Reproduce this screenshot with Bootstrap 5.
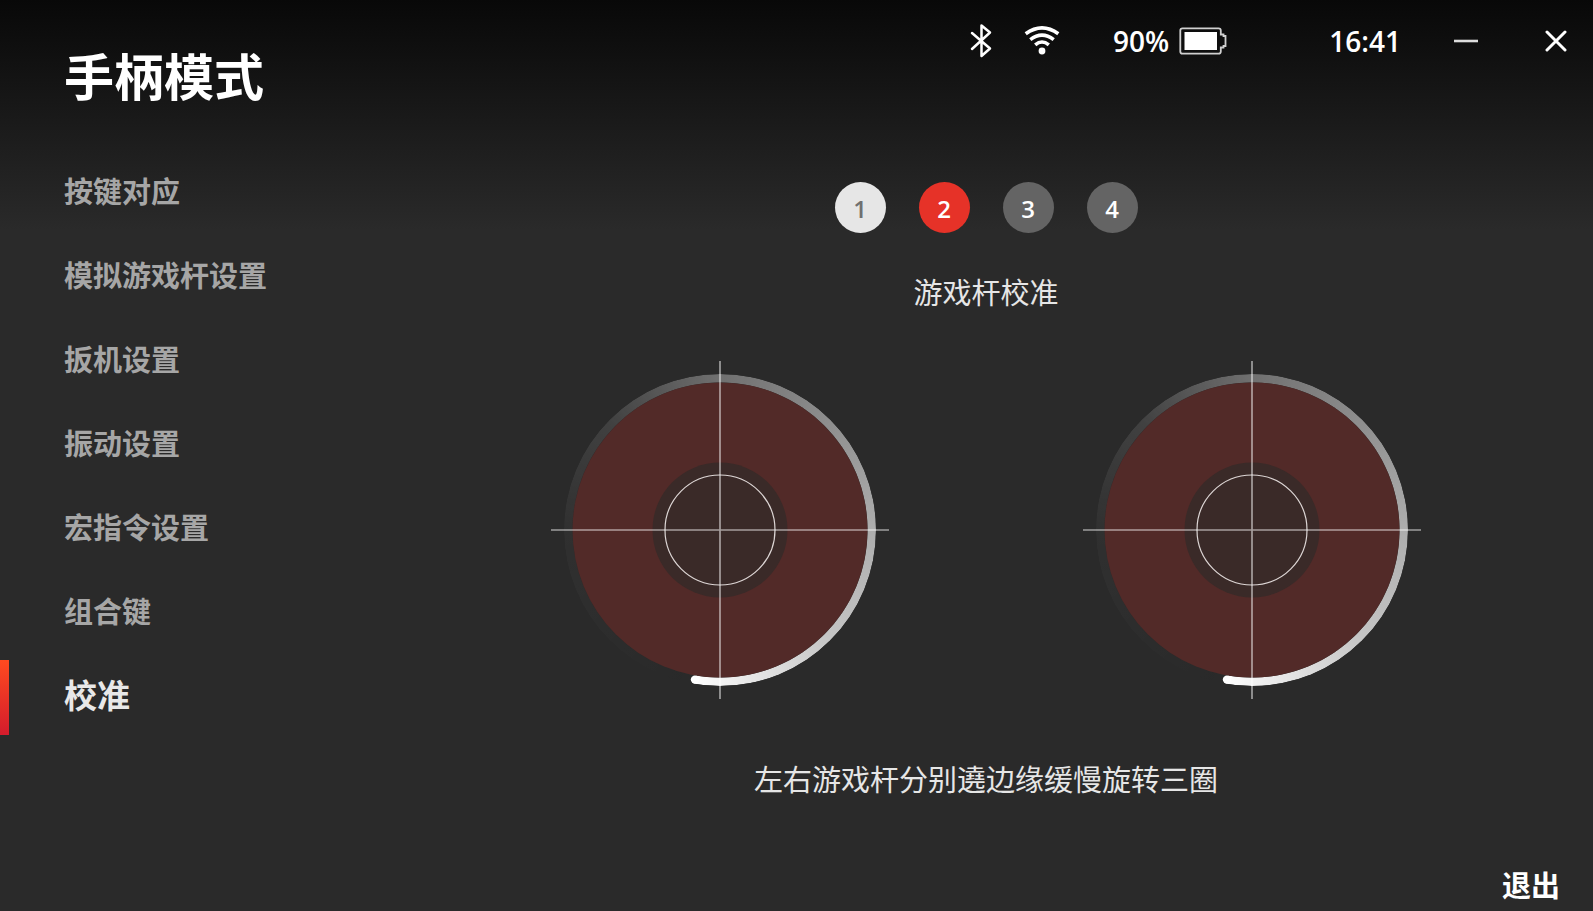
<!DOCTYPE html>
<html lang="zh-CN">
<head>
<meta charset="utf-8">
<meta name="viewport" content="width=device-width, initial-scale=1">
<title>手柄模式</title>
<link href="https://cdn.jsdelivr.net/npm/bootstrap@5.3.0/dist/css/bootstrap.min.css" rel="stylesheet">
<style>
body{background:#2a2a2a linear-gradient(#080808,#2a2a2a 230px) no-repeat;color:#fff;font-family:"Open Sans","Noto Sans CJK SC",sans-serif;font-size:29px;line-height:40px}
.side{width:379px;padding-top:47px}
.side h1{font-size:50px;line-height:60px;margin:0 0 43px;padding-left:64px;font-weight:700}
.side .nav-link{height:84px;padding:0 0 0 64px;color:#a6a6a6;font-weight:700;position:relative}
.side .nav-link.active{font-size:33px;color:#e8e8e8}
.side .nav-link.active::before{content:"";position:absolute;left:0;top:6px;width:9px;height:75px;background:linear-gradient(#ff4a20,#d41c2c)}
.topbar{height:82px;padding-right:26px;font-weight:600;font-size:28px}
.topbar button,.exit{background:none;border:0;color:#fff;padding:0}
.ico-bt{margin-right:31px}
.ico-wifi{margin-right:53px}
.ico-battery{margin:0 102px 0 10px}
.btn-min{margin:0 67px 0 53px}
.steps{gap:33px;margin-top:100px}
.step{width:51px;height:51px;border-radius:50%;border:0;padding:2px 0 0;font-size:24px;line-height:24px;font-weight:600;background:#646464;color:#fff}
.step.done{background:#e6e6e6;color:#707070}
.step.now{background:#e63228}
.hint{color:#e6e6e6;font-weight:400}
.title-hint{margin:40px 0 48px}
.foot-hint{margin:61px 0 0}
.dials{gap:194px}
.dial{position:relative;width:338px;height:338px}
.dial::before{content:"";position:absolute;inset:13px;border-radius:50%;
background:conic-gradient(from 189.5deg,#fff0 0deg,#ffffff08 80deg,#ffffff1c 125deg,#ffffff54 170deg,#ffffff78 215deg,#ffffff9e 260deg,#ffffffba 305deg,#fffffff0 350deg,#fff 360deg);
-webkit-mask:radial-gradient(closest-side,#0000 147px,#000 148px);mask:radial-gradient(closest-side,#0000 147px,#000 148px)}
.dial svg{position:relative;display:block}
.exit{font-weight:700}
footer{padding:0 33px 5px 0}
</style>
</head>
<body>
<div class="d-flex min-vh-100">
  <aside class="side flex-shrink-0">
    <h1>手柄模式</h1>
    <nav class="nav flex-column">
      <a class="nav-link d-flex align-items-center" href="#">按键对应</a>
      <a class="nav-link d-flex align-items-center" href="#">模拟游戏杆设置</a>
      <a class="nav-link d-flex align-items-center" href="#">扳机设置</a>
      <a class="nav-link d-flex align-items-center" href="#">振动设置</a>
      <a class="nav-link d-flex align-items-center" href="#">宏指令设置</a>
      <a class="nav-link d-flex align-items-center" href="#">组合键</a>
      <a class="nav-link active d-flex align-items-center" href="#" aria-current="page">校准</a>
    </nav>
  </aside>
  <div class="flex-grow-1 d-flex flex-column">
    <header class="topbar d-flex align-items-center justify-content-end">
      <svg class="ico-bt" width="24" height="36" viewBox="0 0 24 36" fill="none" stroke="#fff" stroke-width="2.500" stroke-linejoin="round" stroke-linecap="round"><path d="M3 10 21 25.500 12.500 33V2.500L21 9.500 3 26"/></svg>
      <svg class="ico-wifi" width="36" height="30" viewBox="0 0 36 30" fill="none" stroke="#fff" stroke-width="3.600"><path d="M1.700 7.800Q18-4 34.300 7.800M6.300 13.600Q18 4.600 29.700 13.600M11.200 18.800Q18 13.200 24.800 18.800"/><circle cx="18" cy="25" r="3.400" fill="#fff" stroke="none"/></svg>
      <span>90%</span>
      <svg class="ico-battery" width="48" height="28" viewBox="0 0 48 28" fill="none" stroke="#d0d0d0" stroke-width="1.800"><path d="M3.500 1.300H39.500Q41.800 1.300 41.800 3.500V7.500H44.500V9H46.500V19H44.500V20.500H41.800V24.500Q41.800 26.700 39.500 26.700H3.500Q1.300 26.700 1.300 24.500V3.500Q1.300 1.300 3.500 1.300Z"/><path d="M5.500 5H38V23H5.500Z" fill="#fff" stroke="none"/></svg>
      <time>16:41</time>
      <button class="btn-min d-flex" type="button" aria-label="最小化"><svg width="24" height="24" viewBox="0 0 24 24" stroke="#ddd" stroke-width="2.600"><path d="M0 12H24"/></svg></button>
      <button class="d-flex" type="button" aria-label="关闭"><svg width="22" height="22" viewBox="0 0 22 22" stroke="#fff" stroke-width="3" stroke-linecap="round"><path d="M2 2 20 20M20 2 2 20"/></svg></button>
    </header>
    <main class="flex-grow-1 d-flex flex-column align-items-center">
      <div class="steps d-flex">
        <button class="step done" type="button">1</button>
        <button class="step now" type="button" aria-current="step">2</button>
        <button class="step" type="button">3</button>
        <button class="step" type="button">4</button>
      </div>
      <p class="hint title-hint">游戏杆校准</p>
      <div class="dials d-flex">
        <div class="dial">
          <svg width="338" height="338" viewBox="0 0 338 338" fill="none"><circle cx="169" cy="169" r="147.500" fill="#522a28"/><circle cx="169" cy="169" r="67.500" fill="#3a2a28"/><circle cx="169" cy="169" r="55" stroke="#ddd6d5" stroke-width="1.200"/><circle cx="144" cy="318.600" r="4.200" fill="#fff"/><path d="M0 169H338M169 0V338" stroke="#fff" stroke-opacity=".55" stroke-width="1.700"/></svg>
        </div>
        <div class="dial">
          <svg width="338" height="338" viewBox="0 0 338 338" fill="none"><circle cx="169" cy="169" r="147.500" fill="#522a28"/><circle cx="169" cy="169" r="67.500" fill="#3a2a28"/><circle cx="169" cy="169" r="55" stroke="#ddd6d5" stroke-width="1.200"/><circle cx="144" cy="318.600" r="4.200" fill="#fff"/><path d="M0 169H338M169 0V338" stroke="#fff" stroke-opacity=".55" stroke-width="1.700"/></svg>
        </div>
      </div>
      <p class="hint foot-hint">左右游戏杆分别遶边缘缓慢旋转三圈</p>
    </main>
    <footer class="d-flex justify-content-end"><button class="exit" type="button">退出</button></footer>
  </div>
</div>
<script src="https://cdn.jsdelivr.net/npm/bootstrap@5.3.0/dist/js/bootstrap.bundle.min.js"></script>
</body>
</html>
